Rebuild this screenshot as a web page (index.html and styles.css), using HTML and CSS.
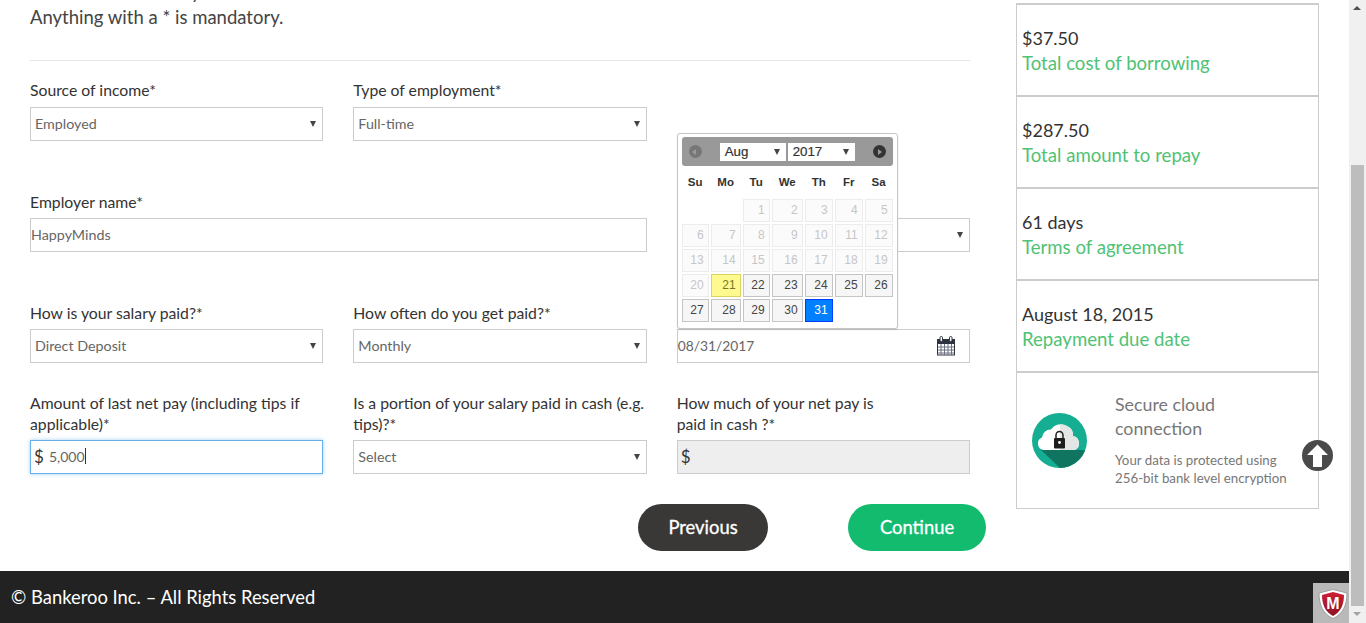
FILE: index.html
```html
<!DOCTYPE html>
<html lang="en">
<head>
    <meta charset="UTF-8">
    <title>Bankeroo - Employment details</title>
    <link rel="stylesheet" href="styles.css">
</head>
<body>

<div class="window">
    <div class="page">
        <div class="content">
            <div class="form">
                <p class="intro-cut">Please tell us about your income.</p>
                <p class="intro">Anything with a * is mandatory.</p>
                <hr class="rule">

                <div class="row row-one">
                    <div class="field">
                        <label>Source of income*</label>
                        <div class="box select">Employed<span class="arrow"></span></div>
                    </div>
                    <div class="field">
                        <label>Type of employment*</label>
                        <div class="box select">Full-time<span class="arrow"></span></div>
                    </div>
                </div>

                <div class="row row-two">
                    <div class="field wide">
                        <label>Employer name*</label>
                        <div class="box text-box">HappyMinds</div>
                    </div>
                    <div class="field">
                        <div class="box select"><span class="arrow"></span></div>
                    </div>
                </div>

                <div class="row row-three">
                    <div class="field">
                        <label>How is your salary paid?*</label>
                        <div class="box select">Direct Deposit<span class="arrow"></span></div>
                    </div>
                    <div class="field">
                        <label>How often do you get paid?*</label>
                        <div class="box select">Monthly<span class="arrow"></span></div>
                    </div>
                    <div class="field date-field">
                        <div class="box text-box date-box">
                            08/31/2017
                            <svg class="cal-icon" viewBox="0 0 20 20" width="20" height="20">
                                <rect x="1.5" y="3.500" width="17" height="15.500" fill="#fff" stroke="#2d3440"/>
                                <rect x="1" y="3" width="18" height="5" fill="#2d3440"/>
                                <path d="M2 11h16M2 14h16M2 17h16M5 8v11M8.500 8v11M12 8v11M15.500 8v11" stroke="#6b6f80" stroke-width="1" fill="none"/>
                                <rect x="4" y="0.500" width="2.500" height="5" rx="1.200" fill="#fff" stroke="#2d3440"/>
                                <rect x="13.500" y="0.500" width="2.500" height="5" rx="1.200" fill="#fff" stroke="#2d3440"/>
                            </svg>
                        </div>

                        <div class="calendar">
                            <div class="cal-head">
                                <span class="cal-nav cal-prev"></span>
                                <div class="cal-selects">
                                    <span class="cal-select cal-month">Aug<span class="arrow"></span></span>
                                    <span class="cal-select cal-year">2017<span class="arrow"></span></span>
                                </div>
                                <span class="cal-nav cal-next"></span>
                            </div>
                            <div class="cal-grid">
                                <span class="dow">Su</span><span class="dow">Mo</span><span class="dow">Tu</span><span class="dow">We</span><span class="dow">Th</span><span class="dow">Fr</span><span class="dow">Sa</span>
                                <span></span><span></span><span class="day off">1</span><span class="day off">2</span><span class="day off">3</span><span class="day off">4</span><span class="day off">5</span>
                                <span class="day off">6</span><span class="day off">7</span><span class="day off">8</span><span class="day off">9</span><span class="day off">10</span><span class="day off">11</span><span class="day off">12</span>
                                <span class="day off">13</span><span class="day off">14</span><span class="day off">15</span><span class="day off">16</span><span class="day off">17</span><span class="day off">18</span><span class="day off">19</span>
                                <span class="day off">20</span><span class="day today">21</span><span class="day">22</span><span class="day">23</span><span class="day">24</span><span class="day">25</span><span class="day">26</span>
                                <span class="day">27</span><span class="day">28</span><span class="day">29</span><span class="day">30</span><span class="day picked">31</span><span></span><span></span>
                            </div>
                        </div>
                    </div>
                </div>

                <div class="row row-four">
                    <div class="field">
                        <label>Amount of last net pay (including tips if applicable)*</label>
                        <div class="box money focused"><span class="dollar">$</span>5,000<span class="caret"></span></div>
                    </div>
                    <div class="field">
                        <label>Is a portion of your salary paid in cash (e.g. tips)?*</label>
                        <div class="box select">Select<span class="arrow"></span></div>
                    </div>
                    <div class="field">
                        <label class="narrow">How much of your net pay is paid in cash ?*</label>
                        <div class="box money disabled"><span class="dollar">$</span></div>
                    </div>
                </div>

                <div class="actions">
                    <a class="btn btn-prev">Previous</a>
                    <a class="btn btn-next">Continue</a>
                </div>
            </div>

            <div class="side">
                <div class="side-item"><b>$37.50</b><span>Total cost of borrowing</span></div>
                <div class="side-item"><b>$287.50</b><span>Total amount to repay</span></div>
                <div class="side-item"><b>61 days</b><span>Terms of agreement</span></div>
                <div class="side-item"><b>August 18, 2015</b><span>Repayment due date</span></div>
                <div class="side-secure">
                    <svg class="cloud" viewBox="0 0 55 55" width="55" height="55">
                        <circle cx="27.500" cy="27.500" r="27.500" fill="#16ae92"/>
                        <path d="M9 37L28 55A27.500 27.500 0 0 0 53 37.500L49 37z" fill="#0f7560"/>
                        <path d="M12 37a6.500 6.500 0 0 1-2-12.500a8.500 8.500 0 0 1 9-8a12 12 0 0 1 16-3.500a10 10 0 0 1 6 10a7.500 7.500 0 0 1 2 14z" fill="#fff"/>
                        <path d="M28 12a12 12 0 0 1 7 1a10 10 0 0 1 6 10a7.500 7.500 0 0 1 2 14H28z" fill="#e4e6e6"/>
                        <path d="M24 25v-3a3.500 3.500 0 0 1 7 0v3" fill="none" stroke="#222" stroke-width="1.500"/>
                        <rect x="22" y="25" width="11" height="10.500" rx="1" fill="#1d1d1d"/>
                        <circle cx="27.500" cy="29.500" r="1.400" fill="#fff"/>
                    </svg>
                    <div class="secure-text">
                        <h4>Secure cloud connection</h4>
                        <p>Your data is protected using 256-bit bank level encryption</p>
                    </div>
                </div>
            </div>
        </div>

        <footer class="footer">
            <span>© Bankeroo Inc. – All Rights Reserved</span>
            <div class="badge">
                <svg viewBox="0 0 30 30" width="30" height="30">
                    <defs>
                        <linearGradient id="shield" x1="0" y1="0" x2="0" y2="1">
                            <stop offset="0" stop-color="#cf1f35"/>
                            <stop offset="1" stop-color="#8c1322"/>
                        </linearGradient>
                    </defs>
                    <path d="M15 0.500L29 4c0 12-4 21-14 25.500C5 25 1 16 1 4z" fill="#fff" stroke="#9aa0a0"/>
                    <path d="M15 3L26 6c0 9-3 17-11 21C7 23 4 15 4 6z" fill="url(#shield)"/>
                    <text class="badge-m" x="15" y="20" text-anchor="middle">M</text>
                </svg>
            </div>
        </footer>

        <a class="to-top">
            <svg viewBox="0 0 31 31" width="31" height="31">
                <circle cx="15.500" cy="15.500" r="15.500" fill="#4a4a4a"/>
                <path d="M15.500 4.500L26 15h-6v12h-9V15H5z" fill="#fff"/>
            </svg>
        </a>
    </div>

    <div class="scrollbar">
        <span class="sb-up"></span>
        <div class="sb-track"><div class="sb-thumb"></div></div>
        <span class="sb-down"></span>
    </div>
</div>

</body>
</html>
```

FILE: styles.css
```css
* {
    box-sizing: border-box;
}

html, body {
    margin: 0;
    height: 100%;
    overflow: hidden;
}

body {
    font-family: 'Lato', sans-serif;
    color: #333;
    background: #fff;
}

.window {
    display: flex;
    height: 623px;
}

.page {
    position: relative;
    flex: 1;
    display: flex;
    flex-direction: column;
    min-width: 0;
}

.content {
    flex: 1;
    display: flex;
    min-height: 0;
    padding-left: 30px;
}

.form {
    width: 940px;
}

.intro-cut {
    margin: -19px 0 3px;
    font-size: 18.500px;
    line-height: 22px;
    color: #444;
}

.intro {
    margin: 0;
    font-size: 18.500px;
    line-height: 22px;
    color: #444;
}

.rule {
    margin: 32px 0 0;
    border: 0;
    border-top: 1px solid #e6e6e6;
}

.row {
    display: grid;
    grid-template-columns: repeat(3, 1fr);
    column-gap: 30px;
    align-items: end;
}

.row-one {
    margin-top: 18px;
}

.row-one label {
    margin-bottom: 7px;
}

.row-two {
    margin-top: 50px;
}

.row-three {
    margin-top: 50px;
}

.row-four {
    margin-top: 29px;
}

.field {
    position: relative;
    min-width: 0;
}

.wide {
    grid-column: span 2;
}

label {
    display: block;
    margin-bottom: 6px;
    font-size: 15.750px;
    line-height: 21px;
    color: #333;
}

.narrow {
    padding-right: 70px;
}

.box {
    position: relative;
    display: flex;
    align-items: center;
    height: 34px;
    padding-bottom: 2px;
    border: 1px solid #ccc;
    background: #fff;
    font-size: 14.300px;
    color: #666;
}

.select {
    padding-left: 4px;
}

.arrow {
    position: absolute;
    right: 6px;
    top: 50%;
    margin-top: -3px;
    border-left: 3px solid transparent;
    border-right: 3px solid transparent;
    border-top: 6px solid #444;
}

.text-box {
    padding-left: 0;
}

.date-box {
    justify-content: space-between;
    padding-right: 13px;
    font-size: 13.800px;
}

.cal-icon {
    display: block;
    margin-top: 2px;
}

.money {
    padding-left: 3px;
    font-size: 14px;
}

.dollar {
    margin-right: 5px;
    font-size: 17px;
    color: #333;
}

.focused {
    border-color: #66afe9;
    box-shadow: 0 0 4px rgba(102, 175, 233, 0.6);
}

.caret {
    width: 1px;
    height: 16px;
    background: #333;
}

.disabled {
    background: #eee;
}

.actions {
    display: flex;
    justify-content: flex-end;
    gap: 80px;
    margin: 30px -16px 0 0;
}

.btn {
    display: block;
    height: 47px;
    border-radius: 24px;
    font-size: 18.400px;
    line-height: 47px;
    text-align: center;
    color: #fff;
    -webkit-text-stroke: 0.3px #fff;
}

.btn-prev {
    width: 130px;
    background: #3a3837;
}

.btn-next {
    width: 138px;
    background: #12bb6e;
}

/* date picker */
.calendar {
    position: absolute;
    left: 0;
    bottom: 34px;
    width: 221px;
    height: 196px;
    padding: 3px 4px;
    background: #fff;
    border: 1px solid #c5c5c5;
    border-radius: 3px;
    box-shadow: 0 1px 2px rgba(0, 0, 0, 0.1);
    font-family: 'Liberation Sans', Arial, sans-serif;
}

.cal-head {
    display: flex;
    align-items: center;
    justify-content: space-between;
    height: 29px;
    padding: 0 7px;
    background: #999;
    border-radius: 3px;
}

.cal-nav {
    width: 13px;
    height: 13px;
    border-radius: 50%;
    background: #333;
    position: relative;
}

.cal-prev {
    background: #777;
}

.cal-prev::after, .cal-next::after {
    content: "";
    position: absolute;
    top: 3.500px;
    border-top: 3px solid transparent;
    border-bottom: 3px solid transparent;
}

.cal-prev::after {
    left: 3.500px;
    border-right: 4px solid #999;
}

.cal-next::after {
    left: 5px;
    border-left: 4px solid #999;
}

.cal-selects {
    display: flex;
    gap: 2px;
}

.cal-select {
    position: relative;
    height: 18px;
    padding-left: 5px;
    background: #fff;
    font-size: 13.300px;
    line-height: 18px;
    color: #333;
    -webkit-text-stroke: 0.2px #333;
}

.cal-month {
    width: 66px;
}

.cal-year {
    width: 67px;
}

.cal-grid {
    display: grid;
    grid-template-columns: 27px 30px 27px 31px 28px 28px 28px;
    grid-template-rows: 31px;
    grid-auto-rows: 23px;
    gap: 2px;
}

.dow {
    display: flex;
    align-items: center;
    justify-content: center;
    font-size: 11.500px;
    font-weight: 700;
    color: #333;
}

.day {
    padding-right: 4px;
    border: 1px solid #c5c5c5;
    background: #f6f6f6;
    font-size: 12px;
    line-height: 21px;
    text-align: right;
    color: #454545;
}

.off {
    border-color: #ececec;
    background: #fbfbfb;
    color: #c6c6c6;
}

.today {
    border-color: #dad55e;
    background: #fffa90;
    color: #777620;
}

.picked {
    border-color: #003eff;
    background: #007fff;
    color: #fff;
}

/* right column */
.side {
    width: 303px;
    margin-left: 46px;
    padding-top: 3px;
}

.side-item {
    display: flex;
    flex-direction: column;
    justify-content: center;
    height: 92px;
    padding: 2px 0 0 5px;
    border: 1px solid #ccc;
    border-top-width: 2px;
    border-bottom-width: 0;
    font-size: 18px;
    line-height: 25px;
}

.side-item b {
    font-weight: 400;
    color: #333;
}

.side-item span {
    font-size: 18.600px;
    color: #4fc274;
}

.side-secure {
    display: flex;
    align-items: center;
    height: 138px;
    padding-left: 15px;
    border: 1px solid #ccc;
    border-top-width: 2px;
}

.cloud {
    flex: none;
}

.secure-text {
    margin-left: 28px;
    padding-bottom: 2px;
    color: #777;
}

.secure-text h4 {
    margin: 0 0 11px;
    width: 120px;
    font-size: 17.800px;
    font-weight: 400;
    line-height: 24px;
}

.secure-text p {
    margin: 0;
    width: 185px;
    font-size: 13.300px;
    line-height: 18px;
}

.footer {
    position: relative;
    display: flex;
    align-items: center;
    flex: none;
    height: 52px;
    padding-left: 11px;
    background: #222;
    font-size: 18.400px;
    color: #fff;
}

.badge {
    position: absolute;
    right: 0;
    bottom: 0;
    width: 36px;
    height: 40px;
    padding: 6px 0 0 5px;
    background: #b9b9b9;
}

.badge svg {
    display: block;
}

.badge-m {
    font-family: 'Liberation Sans', Arial, sans-serif;
    font-size: 16px;
    font-weight: 700;
    fill: #fff;
}

.to-top {
    position: absolute;
    left: 1302px;
    top: 440px;
    width: 31px;
    height: 31px;
}

.scrollbar {
    display: flex;
    flex-direction: column;
    width: 17px;
    background: #f0f0f0;
}

.sb-up, .sb-down {
    position: relative;
    height: 17px;
}

.sb-up::after, .sb-down::after {
    content: "";
    position: absolute;
    left: 4px;
    top: 6px;
    border-left: 4px solid transparent;
    border-right: 4px solid transparent;
}

.sb-up::after {
    border-bottom: 4px solid #505050;
}

.sb-down::after {
    border-top: 4px solid #a3a3a3;
}

.sb-track {
    flex: 1;
    padding-top: 148px;
}

.sb-thumb {
    height: 441px;
    margin: 0 2px;
    background: #bdbdbd;
}
```
